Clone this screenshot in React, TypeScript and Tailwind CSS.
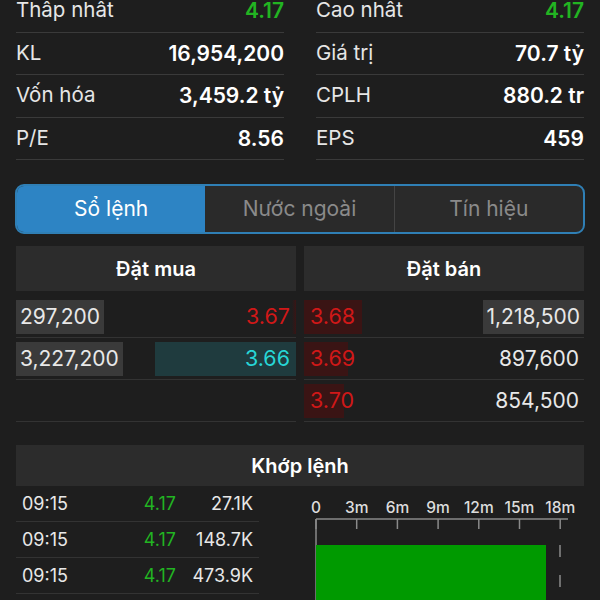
import { FC } from "react";

const stats: [string, string, string, string, boolean][] = [
  ["Thấp nhất", "4.17", "Cao nhất", "4.17", true],
  ["KL", "16,954,200", "Giá trị", "70.7 tỷ", false],
  ["Vốn hóa", "3,459.2 tỷ", "CPLH", "880.2 tr", false],
  ["P/E", "8.56", "EPS", "459", false],
];

const StatCell: FC<{ label: string; value: string; green: boolean }> = ({ label, value, green }) => (
  <div className="flex h-[42.5px] items-center justify-between border-b border-[#3a3a3a]">
    <span className="text-[20.5px] text-[#e6e6e6]">{label}</span>
    <span className={green ? "text-[21px] font-semibold text-[#22b422]" : "text-[21px] font-semibold text-white"}>
      {value}
    </span>
  </div>
);

const trades = [
  ["09:15", "4.17", "27.1K"],
  ["09:15", "4.17", "148.7K"],
  ["09:15", "4.17", "473.9K"],
];

const ticks = ["0", "3m", "6m", "9m", "12m", "15m", "18m"];

const App: FC = () => {
  return (
    <div
      className="h-[600px] w-[600px] overflow-hidden bg-[#1e1e1e] text-white"
      style={{ fontFamily: "Inter, 'Noto Sans', sans-serif" }}
    >
      {/* stats */}
      <div className="-mt-[10px] grid grid-cols-2 gap-x-8 px-4">
        {stats.map(([l1, v1, l2, v2, g]) => (
          <>
            <StatCell key={l1} label={l1} value={v1} green={g} />
            <StatCell key={l2} label={l2} value={v2} green={g} />
          </>
        ))}
      </div>

      {/* tabs */}
      <div className="mx-[15px] mt-[24px] flex h-[50px] overflow-hidden rounded-[9px] border-2 border-[#2f7fb5] bg-[#2a2a2a]">
        <div className="flex flex-1 items-center justify-center bg-[#2d84c4] text-[21px] text-white">Sổ lệnh</div>
        <div className="flex flex-1 items-center justify-center border-r border-[#444] text-[21px] text-[#8a8a8a]">
          Nước ngoài
        </div>
        <div className="flex flex-1 items-center justify-center text-[21px] text-[#8a8a8a]">Tín hiệu</div>
      </div>

      {/* order book */}
      <div className="mt-[12px] grid grid-cols-2 gap-x-2 px-4">
        <div className="flex h-[45px] items-center justify-center bg-[#2c2c2c] text-[20px] font-semibold">Đặt mua</div>
        <div className="flex h-[45px] items-center justify-center bg-[#2c2c2c] text-[20px] font-semibold">Đặt bán</div>

        {/* buy side */}
        <div className="mt-[5px] flex flex-col">
          <div className="flex h-[42px] items-center justify-between border-b border-[#333]">
            <span className="flex h-[34px] items-center bg-[#3a3a3a] px-1 text-[21px] text-[#e8e8e8]">297,200</span>
            <span className="flex h-[34px] items-center bg-gradient-to-l from-[#3a1414] to-transparent to-[8%] pr-[6px] text-[21.5px] text-[#d01818]">
              3.67
            </span>
          </div>
          <div className="flex h-[42px] items-center justify-between border-b border-[#333]">
            <span className="flex h-[34px] items-center bg-[#3a3a3a] px-1 text-[21px] text-[#e8e8e8]">3,227,200</span>
            <span className="flex h-[34px] w-[141px] items-center justify-end bg-[#1f3b3e] pr-[6px] text-[21.5px] text-[#27d6d6]">
              3.66
            </span>
          </div>
          <div className="h-[42px] border-b border-[#333]" />
        </div>

        {/* sell side */}
        <div className="mt-[5px] flex flex-col">
          {[
            ["3.68", "1,218,500", "w-[58px]", true],
            ["3.69", "897,600", "w-[44px]", false],
            ["3.70", "854,500", "w-[40px]", false],
          ].map(([p, v, w, hl]) => (
            <div key={p as string} className="flex h-[42px] items-center justify-between border-b border-[#333]">
              <span className="relative flex h-[34px] items-center text-[21.5px] text-[#d01818]">
                <span className={`absolute inset-y-0 left-0 bg-[#3a1414] ${w}`} />
                <span className="relative pl-[6px]">{p}</span>
              </span>
              <span
                className={
                  hl
                    ? "flex h-[34px] items-center bg-[#3a3a3a] px-1 text-[21px] text-[#e8e8e8]"
                    : "pr-[5px] text-[21px] text-[#e8e8e8]"
                }
              >
                {v}
              </span>
            </div>
          ))}
        </div>
      </div>

      {/* matched */}
      <div className="mx-4 mt-[23px] flex h-[41px] items-center justify-center bg-[#2c2c2c] text-[20px] font-semibold">
        Khớp lệnh
      </div>
      <div className="mx-4 flex">
        <div className="flex w-[243px] shrink-0 flex-col">
          {trades.map(([t, p, v], i) => (
            <div key={i} className="flex h-[36px] items-center border-b border-[#333] text-[18px]">
              <span className="w-[62px] pl-[6px] text-[#e8e8e8]">{t}</span>
              <span className="w-[98px] text-right text-[#22b422]">{p}</span>
              <span className="flex-1 pr-[6px] text-right text-[#e8e8e8]">{v}</span>
            </div>
          ))}
        </div>
        <div className="ml-[56px] shrink-0">
          <svg width="260" height="114" viewBox="0 0 260 114" overflow="visible">
            {ticks.map((t, i) => (
              <g key={t}>
                <text
                  x={i * 40.7 + 1}
                  y="27"
                  fill="#dcdcdc"
                  fontSize="15.5"
                  fontWeight="500"
                  textAnchor="middle"
                  fontFamily="Inter, sans-serif"
                >
                  {t}
                </text>
                <line x1={i * 40.7 + 1} y1="33" x2={i * 40.7 + 1} y2="43" stroke="#8a8a8a" strokeWidth="1.5" />
              </g>
            ))}
            <line x1="1" y1="33" x2="253" y2="33" stroke="#8a8a8a" strokeWidth="1.5" />
            <line x1="1" y1="33" x2="1" y2="114" stroke="#8a8a8a" strokeWidth="1.5" />
            <rect x="1" y="59" width="230" height="60" fill="#009a00" />
            <line x1="245" y1="59" x2="245" y2="114" stroke="#8a8a8a" strokeWidth="1.5" strokeDasharray="12 18" />
          </svg>
        </div>
      </div>
    </div>
  );
};

export default App;
